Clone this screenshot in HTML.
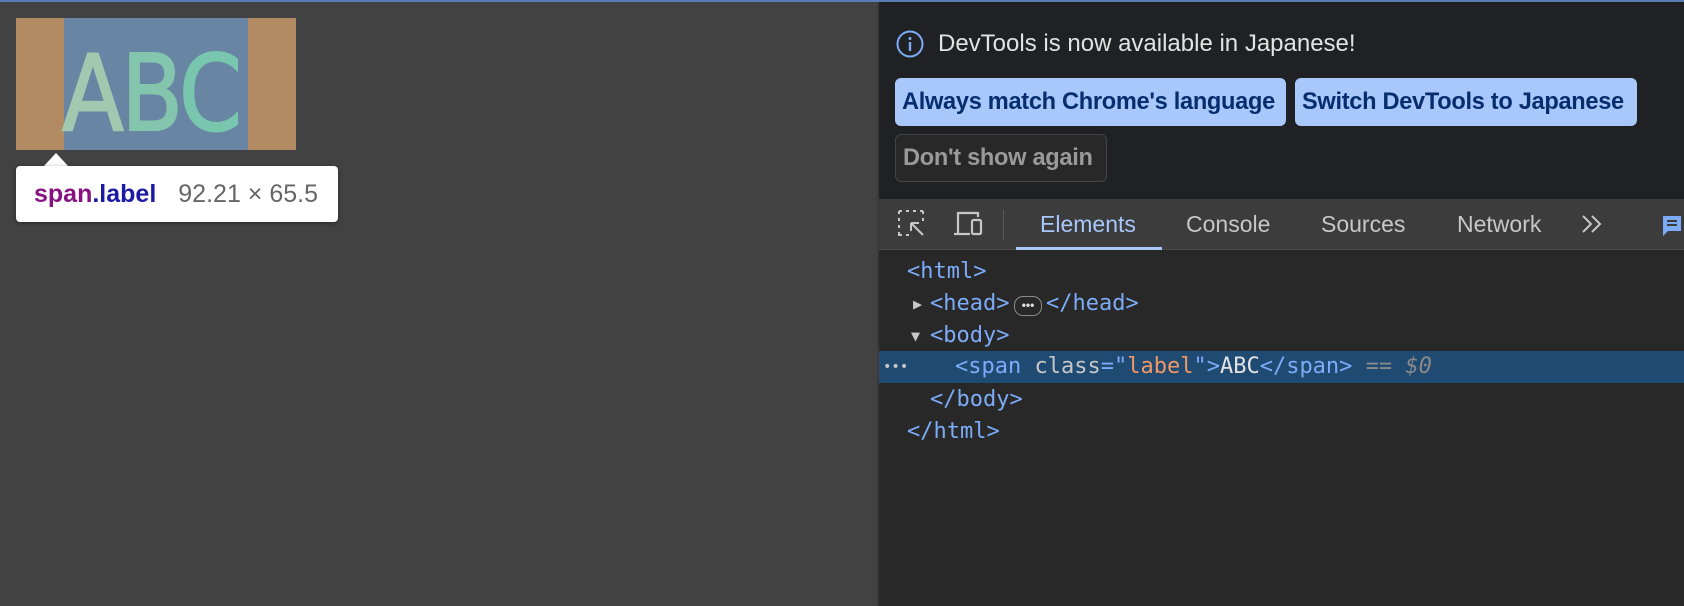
<!DOCTYPE html>
<html><head><style>
*{margin:0;padding:0;box-sizing:border-box}
body{width:1684px;height:606px;background:#424242;position:relative;overflow:hidden;font-family:"Liberation Sans",sans-serif}
.a{position:absolute}
.btn{position:absolute;height:48px;border-radius:6px;font-size:23.6px;font-weight:bold;line-height:48px;padding-left:7px;letter-spacing:-0.3px;white-space:nowrap}
.mono{font-family:"DejaVu Sans Mono","Liberation Mono",monospace;font-size:22px;color:#7cacf8;white-space:pre;position:absolute;line-height:32px}
.tab{position:absolute;top:199px;line-height:50px;font-size:23px;color:#c7c7c7}
</style></head><body>
<div class="a" style="left:0;top:0;width:1684px;height:2px;background:#5a7db5"></div>
<div class="a" style="left:16px;top:18px;width:280px;height:132px;background:#b38b63"></div>
<div class="a" style="left:64px;top:18px;width:184px;height:132px;background:#6885a3;overflow:hidden"></div>
<div class="a" style="left:62px;top:42px;font-size:105px;line-height:105px;font-family:'DejaVu Sans',sans-serif;transform:scaleX(0.86);transform-origin:0 0;letter-spacing:-3px;-webkit-text-stroke:2px currentColor"><span style="color:#a2c9b0">A</span><span style="color:#84c6ad">B</span><span style="color:#78c6ad">C</span></div>
<div class="a" style="left:43px;top:153px;width:0;height:0;border-left:13px solid transparent;border-right:13px solid transparent;border-bottom:14px solid #fff"></div>
<div class="a" style="left:16px;top:166px;width:322px;height:56px;background:#fff;border-radius:4px;box-shadow:0 1px 4px rgba(0,0,0,.4);font-size:25px;line-height:56px;padding-left:18px;white-space:nowrap"><b style="color:#881280">span</b><b style="color:#1a1aa6">.label</b><span style="color:#666;margin-left:22px">92.21 × 65.5</span></div>
<div class="a" style="left:877px;top:2px;width:807px;height:604px;background:#282828;border-left:2px solid #3a3a3a"></div>
<div class="a" style="left:879px;top:2px;width:805px;height:197px;background:#202124"></div>
<svg class="a" style="left:896px;top:30px" width="28" height="28" viewBox="0 0 28 28"><circle cx="14" cy="14" r="12.5" fill="none" stroke="#7cacf8" stroke-width="2"/><circle cx="14" cy="8.5" r="1.5" fill="#7cacf8"/><rect x="12.8" y="12" width="2.4" height="9" fill="#7cacf8"/></svg>
<div class="a" style="left:938px;top:30px;font-size:24px;color:#e3e3e3;line-height:28px;white-space:nowrap">DevTools is now available in Japanese!</div>
<div class="btn" style="left:895px;top:78px;width:391px;background:#a8c7fa;color:#062e6f">Always match Chrome's language</div>
<div class="btn" style="left:1295px;top:78px;width:342px;background:#a8c7fa;color:#062e6f">Switch DevTools to Japanese</div>
<div class="btn" style="left:895px;top:134px;width:212px;background:#282828;border:1px solid #444;color:#9a9a9a;line-height:46px">Don't show again</div>
<div class="a" style="left:879px;top:199px;width:805px;height:51px;background:#3c3c3c;border-bottom:1px solid #4a4a4a"></div>
<svg class="a" style="left:897px;top:209px" width="30" height="30" viewBox="0 0 30 30" fill="none" stroke="#c7c7c7" stroke-width="2"><path d="M2 2h3M9 2h3M16 2h3M23 2h3M2 2v3M2 9v3M2 16v3M2 23v3h3M26 2v3M26 9v3M9 26h3" /><path d="M14 14l12 12M14 14v8M14 14h8"/></svg>
<svg class="a" style="left:952px;top:209px" width="34" height="30" viewBox="0 0 34 30" fill="none" stroke="#c7c7c7" stroke-width="2.2"><path d="M6 24V4h20v4"/><path d="M2 25h16"/><rect x="20" y="11" width="9" height="14" rx="1.5"/></svg>
<div class="a" style="left:1003px;top:210px;width:1px;height:30px;background:#5a5a5a"></div>
<div class="tab" style="left:1040px;color:#a8c7fa">Elements</div>
<div class="a" style="left:1016px;top:247px;width:146px;height:3px;background:#a8c7fa"></div>
<div class="tab" style="left:1186px">Console</div>
<div class="tab" style="left:1321px">Sources</div>
<div class="tab" style="left:1457px">Network</div>
<svg class="a" style="left:1580px;top:214px" width="24" height="20" viewBox="0 0 24 20" fill="none" stroke="#c7c7c7" stroke-width="2"><path d="M3 2l8 8-8 8M12 2l8 8-8 8"/></svg>
<svg class="a" style="left:1662px;top:215px" width="20" height="22" viewBox="0 0 20 22"><path d="M1 1h18v15H6l-5 5z" fill="#7cacf8"/><path d="M5 6h10M5 10h10" stroke="#3c3c3c" stroke-width="2"/></svg>
<div class="a" style="left:879px;top:351px;width:805px;height:32px;background:#1f4a72"></div>
<div class="mono" style="left:907px;top:256px">&lt;html&gt;</div>
<div class="mono" style="left:913px;top:288px;color:#c7c7c7;font-size:15px">▶</div>
<div class="mono" style="left:930px;top:288px">&lt;head&gt;</div>
<div class="a" style="left:1014px;top:296px;width:28px;height:20px;border:1.5px solid #8a8a8a;border-radius:9px;color:#ddd;font-size:12px;line-height:16px;text-align:center;font-weight:bold">•••</div>
<div class="mono" style="left:1046px;top:288px">&lt;/head&gt;</div>
<div class="mono" style="left:911px;top:320px;color:#c7c7c7;font-size:15px">▼</div>
<div class="mono" style="left:930px;top:320px">&lt;body&gt;</div>
<div class="mono" style="left:883px;top:351px;color:#c7c7c7;font-size:14px">•••</div>
<div class="mono" style="left:955px;top:351px">&lt;span <span style="color:#c7c7c7">class</span>="<span style="color:#f29766">label</span>"&gt;<span style="color:#e3e3e3">ABC</span>&lt;/span&gt; <span style="color:#8a8a8a">== <i>$0</i></span></div>
<div class="mono" style="left:930px;top:384px">&lt;/body&gt;</div>
<div class="mono" style="left:907px;top:416px">&lt;/html&gt;</div>
</body></html>
